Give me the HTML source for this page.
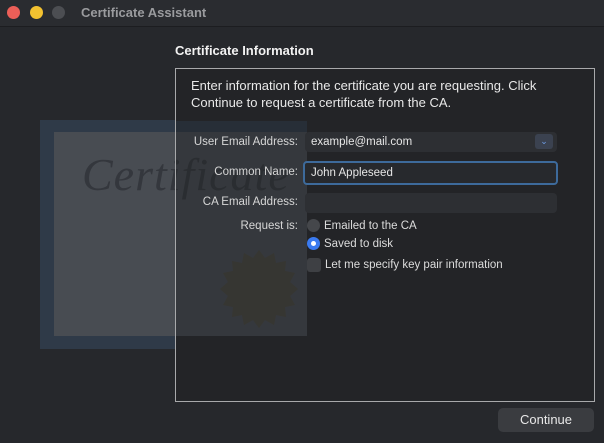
<!DOCTYPE html>
<html><head><style>
body{margin:0;width:604px;height:443px;background:#26282c;font-family:"Liberation Sans",sans-serif;position:relative;overflow:hidden;color:#ddd}
.a{position:absolute}
.lbl{position:absolute;font-size:11.5px;color:#d6d6d6;text-align:right;width:130px;left:168px}
.fld{position:absolute;left:305px;width:252px;height:20px;background:#2d2f33;border-radius:4px;font-size:11.5px;color:#e6e6e6;line-height:20px;text-indent:6px}
.rad{position:absolute;left:307px;width:13px;height:13px;border-radius:50%;background:#45474b}
.rt{position:absolute;left:324px;font-size:11.5px;color:#dcdcdc}
</style></head><body>
<div class="a" style="left:0;top:0;width:604px;height:26px;background:#2a2c30;border-bottom:1px solid #1c1d20"></div>
<div class="a" style="left:7px;top:6px;width:13px;height:13px;border-radius:50%;background:#ec5f58"></div>
<div class="a" style="left:30px;top:6px;width:13px;height:13px;border-radius:50%;background:#f3c230"></div>
<div class="a" style="left:52px;top:6px;width:13px;height:13px;border-radius:50%;background:#4c4e52"></div>
<div class="a" style="left:81px;top:5px;font-size:13px;font-weight:bold;color:#9a9b9e">Certificate Assistant</div>
<div class="a" style="left:175px;top:43px;font-size:13px;font-weight:bold;color:#f2f2f2">Certificate Information</div>
<div class="a" style="left:40px;top:120px;width:267px;height:229px;background:#2f3a48"></div>
<div class="a" style="left:54px;top:132px;width:253px;height:204px;background:#484c52"></div>
<div class="a" style="left:82px;top:148px;font-family:'Liberation Serif',serif;font-style:italic;font-size:46px;color:#34373d;letter-spacing:1px">Certificate</div>
<svg class="a" style="left:218px;top:248px" width="82" height="82" viewBox="0 0 82 82"><polygon fill="#4a483e" points="41,2 47,10 56,5 58,15 68,13 67,23 77,25 72,34 80,41 72,48 77,57 67,59 68,69 58,67 56,77 47,72 41,80 35,72 26,77 24,67 14,69 15,59 5,57 10,48 2,41 10,34 5,25 15,23 14,13 24,15 26,5 35,10"/></svg>
<div class="a" style="left:175px;top:68px;width:418px;height:332px;border:1px solid #a8a9ab;background:rgba(32,33,36,0.45)"></div>
<div class="a" style="left:176px;top:336px;width:417px;height:64px;background:#232427"></div>
<div class="a" style="left:176px;top:69px;width:417px;height:52px;background:#232427"></div>
<div class="a" style="left:307px;top:121px;width:286px;height:215px;background:#232427"></div>
<div class="a" style="left:191px;top:77px;font-size:13px;line-height:17px;color:#e8e8e8">Enter information for the certificate you are requesting. Click<br>Continue to request a certificate from the CA.</div>
<div class="lbl" style="top:136px">User Email Address:</div>
<div class="lbl" style="top:166px">Common Name:</div>
<div class="lbl" style="top:196px">CA Email Address:</div>
<div class="lbl" style="top:220px">Request is:</div>
<div class="fld" style="top:132px">example@mail.com</div>
<div class="a" style="left:535px;top:134px;width:18px;height:15px;background:#3b4250;border-radius:3px;color:#6e9ee8;font-size:9px;text-align:center;line-height:15px">&#8964;</div>
<div class="fld" style="top:161px;left:303px;width:251px;height:20px;border:2px solid #3d6a9b;background:#27292d">John Appleseed</div>
<div class="fld" style="top:193px"></div>
<div class="rad" style="top:219px"></div><div class="rt" style="top:220px">Emailed to the CA</div>
<div class="rad" style="top:237px;background:#3a7af0"><div class="a" style="left:4px;top:4px;width:5px;height:5px;border-radius:50%;background:#fff"></div></div><div class="rt" style="top:238px">Saved to disk</div>
<div class="a" style="left:307px;top:258px;width:14px;height:14px;border-radius:3px;background:#3e4044"></div><div class="rt" style="top:259px;left:325px">Let me specify key pair information</div>
<div class="a" style="left:498px;top:408px;width:96px;height:24px;border-radius:5px;background:#3a3c40;color:#e8e8e8;font-size:13px;text-align:center;line-height:24px">Continue</div>
</body></html>
